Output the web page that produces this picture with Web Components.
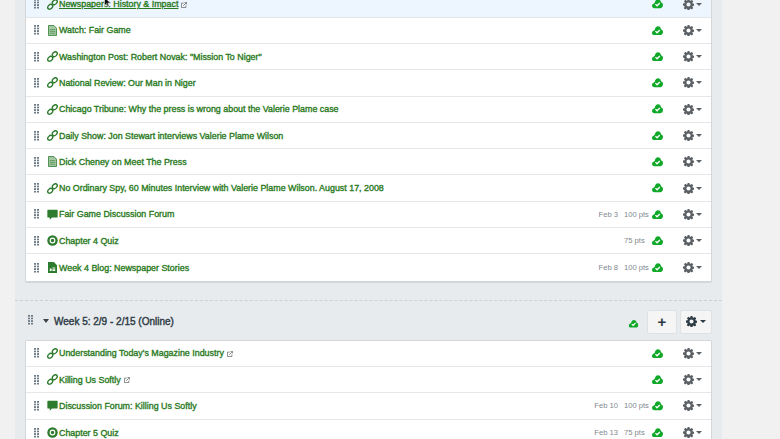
<!DOCTYPE html>
<html>
<head>
<meta charset="utf-8">
<title>Modules</title>
<style>
  html, body { margin: 0; height: 439px; overflow: hidden; background: #f1f1f1; font-family: "Liberation Sans", Arial, sans-serif; }
</style>
</head>
<body>
<modules-page>
  <course-module first>
    <module-item type="link" ext hover underline title="Newspapers: History &amp; Impact"></module-item>
    <module-item type="page" title="Watch: Fair Game"></module-item>
    <module-item type="link" title="Washington Post: Robert Novak: &quot;Mission To Niger&quot;"></module-item>
    <module-item type="link" title="National Review: Our Man in Niger"></module-item>
    <module-item type="link" title="Chicago Tribune: Why the press is wrong about the Valerie Plame case"></module-item>
    <module-item type="link" title="Daily Show: Jon Stewart interviews Valerie Plame Wilson"></module-item>
    <module-item type="page" title="Dick Cheney on Meet The Press"></module-item>
    <module-item type="link" title="No Ordinary Spy, 60 Minutes Interview with Valerie Plame Wilson. August 17, 2008"></module-item>
    <module-item type="forum" date="Feb 3" pts="100 pts" title="Fair Game Discussion Forum"></module-item>
    <module-item type="quiz" pts="75 pts" title="Chapter 4 Quiz"></module-item>
    <module-item type="blog" date="Feb 8" pts="100 pts" title="Week 4 Blog: Newspaper Stories"></module-item>
  </course-module>
  <course-module heading="Week 5: 2/9 - 2/15 (Online)">
    <module-item type="link" ext title="Understanding Today's Magazine Industry"></module-item>
    <module-item type="link" ext title="Killing Us Softly"></module-item>
    <module-item type="forum" date="Feb 10" pts="100 pts" title="Discussion Forum: Killing Us Softly"></module-item>
    <module-item type="quiz" date="Feb 13" pts="75 pts" title="Chapter 5 Quiz"></module-item>
  </course-module>
</modules-page>
<script>
const GEAR = `<svg viewBox="0 0 16 16" width="11" height="11"><path fill="currentColor" fill-rule="evenodd" d="M6.600 0h2.800l.4 2.200 1.200.5L12.900 1.400l2 2-1.300 1.900.5 1.200 2.200.4v2.800l-2.200.4-.5 1.200 1.300 1.900-2 2-1.900-1.300-1.200.5-.4 2.200H6.600l-.4-2.200-1.200-.5-1.900 1.300-2-2 1.300-1.900-.5-1.200L0 9.400V6.600l2.200-.4.500-1.200L1.400 3.100l2-2 1.900 1.300 1.200-.5zM8 5a3 3 0 1 0 0 6 3 3 0 0 0 0-6z"/></svg>`;

const ICONS = {
  link: `<svg viewBox="0 0 12 12" width="11" height="11"><g fill="none" stroke="#2d7b2d" stroke-width="1.500"><ellipse cx="3.500" cy="8.500" rx="3" ry="2.200" transform="rotate(-45 3.500 8.500)"/><ellipse cx="8.500" cy="3.500" rx="3" ry="2.200" transform="rotate(-45 8.500 3.500)"/></g></svg>`,
  page: `<svg viewBox="0 0 10 12" width="9" height="11"><path fill="#a5c8a5" stroke="#2d7b2d" stroke-width=".9" d="M.5.500h6l3 3v8h-9z"/><path stroke="#2d7b2d" stroke-width=".6" d="M2 5h6M2 7h6M2 9h6"/></svg>`,
  forum: `<svg viewBox="0 0 12 12" width="11" height="11"><path fill="#2d7b2d" d="M1 .8h10a.6.6 0 0 1 .6.6v7.400a.6.6 0 0 1-.6.6H5.500L3 11.700V9.400H1a.6.6 0 0 1-.6-.6V1.400A.6.6 0 0 1 1 .8z"/></svg>`,
  quiz: `<svg viewBox="0 0 12 12" width="11" height="11"><circle cx="6" cy="6" r="5.700" fill="#2d7b2d"/><circle cx="6" cy="6" r="2.500" fill="none" stroke="#fff" stroke-width="1.300"/></svg>`,
  blog: `<svg viewBox="0 0 10 12" width="9" height="11"><path fill="#2d7b2d" d="M0 0h6.500L10 3.500V12H0z"/><path fill="#fff" d="M2 7h2v3H2zM5 6h3v1H5zM5 8h3v2H5z"/></svg>`
};

class DragHandle extends HTMLElement {
  constructor() {
    super();
    this.attachShadow({ mode: "open" }).innerHTML = `
      <style>
        :host{display:block;flex:none;width:5px;height:10px;background:radial-gradient(circle at 1px 1px,#6d7c86 .85px,transparent 1.100px) 0 0/3px 2.600px}
      </style>`;
  }
}
customElements.define("drag-handle", DragHandle);

class PublishCloud extends HTMLElement {
  constructor() {
    super();
    this.attachShadow({ mode: "open" }).innerHTML = `
      <style>:host{display:block;line-height:0} svg{display:block}</style>
      <svg viewBox="0 0 12 10" width="11" height="9.500">
        <path fill="#0fa828" d="M2.700 9.800C1 9.800 0 8.700 0 7.400c0-1.100.7-2 1.800-2.300C2.100 4.500 2.500 4 3 3.800 3.500 1.600 4.800.2 6.500.2c1.800 0 3.100 1.300 3.300 3.200 1.300.5 2.200 1.600 2.200 3 0 1.900-1.300 3.400-3.200 3.400z"/>
        <path fill="none" stroke="#fff" stroke-width="1.500" d="M3.800 5.400l1.700 1.700 3-3"/>
      </svg>`;
  }
}
customElements.define("publish-cloud", PublishCloud);

class GearMenu extends HTMLElement {
  constructor() {
    super();
    this.attachShadow({ mode: "open" }).innerHTML = `
      <style>
        :host{display:flex;align-items:center;gap:2px;color:#5b6065}
        .caret{width:0;height:0;border:3px solid transparent;border-top:3.500px solid currentColor;border-bottom:0}
        svg{display:block}
      </style>${GEAR}<span class="caret"></span>`;
  }
}
customElements.define("gear-menu", GearMenu);

class ModuleItem extends HTMLElement {
  constructor() {
    super();
    this.attachShadow({ mode: "open" });
  }
  connectedCallback() {
    const type = this.getAttribute("type");
    const date = this.getAttribute("date") || "";
    const pts = this.getAttribute("pts") || "";
    const ext = this.hasAttribute("ext")
      ? `<svg class="ext" viewBox="0 0 8 8" width="6" height="6"><path fill="none" stroke="#555" stroke-width=".9" d="M3.500 1.500H.6v5.900h5.900V4.500M3 5l4-4M4.700.6h2.700v2.700"/></svg>` : "";
    this.shadowRoot.innerHTML = `
      <style>
        :host{display:flex;align-items:center;height:26.300px;box-sizing:border-box;
          border-bottom:1px solid #e4e6e9;background:#fff;padding:0 9px 0 8px;font-size:7.600px;color:#80898f}
        :host([hover]){background:#edf5fe}
        :host(:last-of-type){border-bottom:0}
        .icon{flex:none;margin-left:8px;width:11px;display:flex;justify-content:center}
        .icon svg{display:block}
        .title{flex:1;margin-left:1px;font-size:8.880px;color:#2a7a22;-webkit-text-stroke:.35px #2a7a22;
          white-space:nowrap;display:flex;align-items:center;gap:3px;min-width:0}
        :host([underline]) .name{text-decoration:underline}
        .ext{margin-top:1px}
        .date{white-space:nowrap;margin-right:6px}
        .pts{white-space:nowrap;width:28px}
        .tools{flex:none;width:50px;display:flex;align-items:center;justify-content:space-between}
      </style>
      <drag-handle></drag-handle>
      <span class="icon">${ICONS[type]}</span>
      <span class="title"><span class="name"></span>${ext}</span>
      <span class="date">${date}</span>
      <span class="pts">${pts}</span>
      <span class="tools"><publish-cloud></publish-cloud><gear-menu></gear-menu></span>`;
    this.shadowRoot.querySelector(".name").textContent = this.getAttribute("title");
  }
}
customElements.define("module-item", ModuleItem);

class CourseModule extends HTMLElement {
  constructor() {
    super();
    this.attachShadow({ mode: "open" });
  }
  connectedCallback() {
    const heading = this.getAttribute("heading");
    const head = heading ? `
      <header>
        <drag-handle></drag-handle>
        <span class="tri"></span>
        <h2></h2>
        <publish-cloud class="small"></publish-cloud>
        <button class="plus">+</button>
        <button class="cog">${GEAR}<span class="c"></span></button>
      </header>` : "";
    this.shadowRoot.innerHTML = `
      <style>
        :host{display:block;padding:0 10px}
        :host([first]){margin-top:-9.600px;padding-bottom:17px;border-bottom:1px dashed #cbd0d4}
        header{display:flex;align-items:center;height:40px;padding-left:3px}
        .tri{width:0;height:0;border:3px solid transparent;border-top:4px solid #3b4248;border-bottom:0;margin:2px 5px 0 10px}
        h2{margin:3px 0 0;font-size:10px;font-weight:normal;-webkit-text-stroke:.4px #2d3b45;color:#2d3b45;flex:1;white-space:nowrap}
        .small{margin:9px 8px 0 0;transform:scale(.88)}
        button{all:unset;box-sizing:border-box;height:24px;margin-top:4px;background:#f5f5f5;border:1px solid #dfe2e5;border-radius:2px;display:flex;align-items:center;justify-content:center;color:#2d3b45}
        .plus{width:30px;font-size:15px;font-weight:bold;line-height:1;margin-right:3px}
        .cog{width:32px;gap:3px}
        .c{width:0;height:0;border:3px solid transparent;border-top:3.500px solid currentColor;border-bottom:0}
        .panel{background:#fff;border:1px solid #d3d7da;border-bottom-width:2px;border-radius:2px;overflow:hidden}
        :host([heading]) .panel{border-bottom:0}
        :host([heading]){margin-top:-1px}
      </style>
      ${head}
      <div class="panel"><slot></slot></div>`;
    if (heading) this.shadowRoot.querySelector("h2").textContent = heading;
  }
}
customElements.define("course-module", CourseModule);

class ModulesPage extends HTMLElement {
  constructor() {
    super();
    this.attachShadow({ mode: "open" }).innerHTML = `
      <style>
        :host{display:block;width:707px;height:439px;margin-left:15px;background:#e8ebee;overflow:hidden;position:relative}
        .cursor{position:absolute;left:89px;top:-3px}
      </style>
      <slot></slot>
      <svg class="cursor" width="8" height="11" viewBox="0 0 8 11"><path fill="#111" stroke="#fff" stroke-width=".5" d="M.5 0v8.500l2-1.800 1.300 3 1.300-.6-1.300-2.900h2.700z"/></svg>`;
  }
}
customElements.define("modules-page", ModulesPage);
</script>
</body>
</html>
